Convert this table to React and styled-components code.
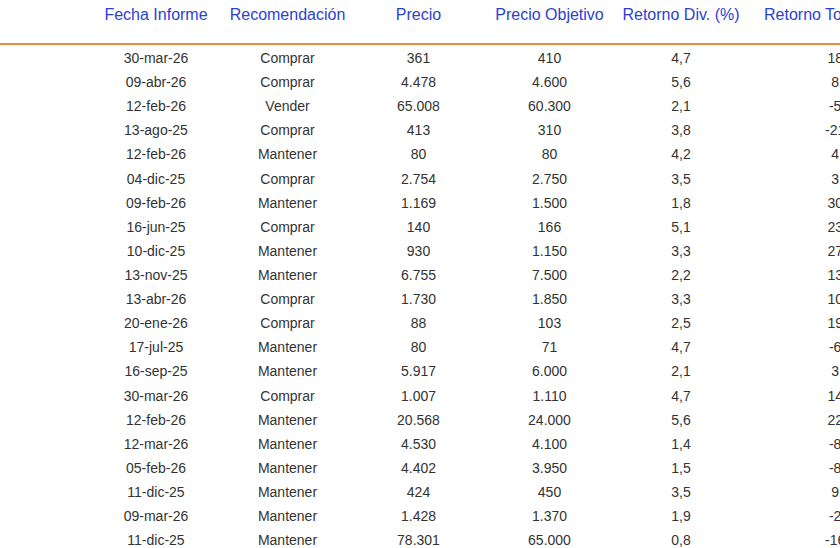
import React from "react";
import styled, { createGlobalStyle } from "styled-components";

const GlobalStyle = createGlobalStyle`
  html, body {
    margin: 0;
    padding: 0;
    background: #ffffff;
    overflow: hidden;
  }
  body {
    font-family: "Liberation Sans", Arial, sans-serif;
  }
`;

const COLS = "132px 131px 131px 131px 132px 188px";

const Page = styled.div`
  width: 840px;
  height: 548px;
  overflow: hidden;
`;

const HeaderRow = styled.div`
  display: grid;
  grid-template-columns: ${COLS};
  padding-left: 90px;
  height: 43px;
  border-bottom: 2px solid #f0883a;
  width: 1100px;
`;

const HeaderCell = styled.div`
  padding-top: 6px;
  font-size: 16px;
  color: #2a3fd4;
  white-space: nowrap;
  text-align: ${(p) => (p.$left ? "left" : "center")};
  padding-left: ${(p) => (p.$left ? "17px" : "0")};
`;

const Body = styled.div`
  padding-left: 90px;
  padding-top: 1px;
`;

const Row = styled.div`
  display: grid;
  grid-template-columns: ${COLS};
  height: 24.12px;
  align-items: center;
`;

const Cell = styled.div`
  font-size: 14px;
  color: #333333;
  text-align: center;
  white-space: nowrap;
`;

const headers = [
  "Fecha Informe",
  "Recomendación",
  "Precio",
  "Precio Objetivo",
  "Retorno Div. (%)",
  "Retorno Total (%)",
];

const rows = [
  ["30-mar-26", "Comprar", "361", "410", "4,7", "18,3"],
  ["09-abr-26", "Comprar", "4.478", "4.600", "5,6", "8,3"],
  ["12-feb-26", "Vender", "65.008", "60.300", "2,1", "-5,1"],
  ["13-ago-25", "Comprar", "413", "310", "3,8", "-21,1"],
  ["12-feb-26", "Mantener", "80", "80", "4,2", "4,2"],
  ["04-dic-25", "Comprar", "2.754", "2.750", "3,5", "3,4"],
  ["09-feb-26", "Mantener", "1.169", "1.500", "1,8", "30,1"],
  ["16-jun-25", "Comprar", "140", "166", "5,1", "23,7"],
  ["10-dic-25", "Mantener", "930", "1.150", "3,3", "27,0"],
  ["13-nov-25", "Mantener", "6.755", "7.500", "2,2", "13,2"],
  ["13-abr-26", "Comprar", "1.730", "1.850", "3,3", "10,2"],
  ["20-ene-26", "Comprar", "88", "103", "2,5", "19,5"],
  ["17-jul-25", "Mantener", "80", "71", "4,7", "-6,6"],
  ["16-sep-25", "Mantener", "5.917", "6.000", "2,1", "3,5"],
  ["30-mar-26", "Comprar", "1.007", "1.110", "4,7", "14,9"],
  ["12-feb-26", "Mantener", "20.568", "24.000", "5,6", "22,3"],
  ["12-mar-26", "Mantener", "4.530", "4.100", "1,4", "-8,1"],
  ["05-feb-26", "Mantener", "4.402", "3.950", "1,5", "-8,8"],
  ["11-dic-25", "Mantener", "424", "450", "3,5", "9,6"],
  ["09-mar-26", "Mantener", "1.428", "1.370", "1,9", "-2,2"],
  ["11-dic-25", "Mantener", "78.301", "65.000", "0,8", "-16,2"],
];

export default function App() {
  return (
    <>
      <GlobalStyle />
      <Page>
        <HeaderRow>
          {headers.map((h, i) => (
            <HeaderCell key={h} $left={i === headers.length - 1}>
              {h}
            </HeaderCell>
          ))}
        </HeaderRow>
        <Body>
          {rows.map((r, i) => (
            <Row key={i}>
              {r.map((v, j) => (
                <Cell key={j}>{v}</Cell>
              ))}
            </Row>
          ))}
        </Body>
      </Page>
    </>
  );
}
